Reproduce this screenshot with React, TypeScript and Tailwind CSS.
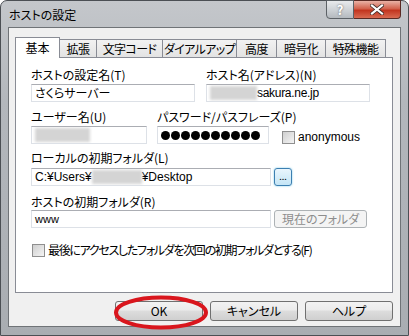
import { useState } from "react";

const tabs = [
  { label: "基本", w: "w-[45px]" },
  { label: "拡張", w: "w-[37px]" },
  { label: "文字コード", w: "w-[66px]" },
  { label: "ダイアルアップ", w: "w-[74px]" },
  { label: "高度", w: "w-[40px]" },
  { label: "暗号化", w: "w-[49px]" },
  { label: "特殊機能", w: "w-[60px]" },
];

/* blurred (hidden) text inside a field */
const Blur = ({ w }: { w: string }) => (
  <span className={`inline-block h-[14px] ${w} bg-[#d4d4d4] blur-[1.5px]`} />
);

const Check = () => (
  <span className="inline-block w-[13px] h-[13px] border border-[#8f8f8f] bg-[linear-gradient(135deg,#cfcfcf,#f4f4f4)] shrink-0" />
);

const Field = ({ w, children }: { w: string; children?: React.ReactNode }) => (
  <div
    className={`${w} h-[18px] flex items-center px-[3px] bg-white border border-[#dde1e7] border-t-[#abadb3] text-[12px] leading-none whitespace-nowrap overflow-hidden`}
  >
    {children}
  </div>
);

const Button = ({ label, w = "w-[88px]" }: { label: string; w?: string }) => (
  <button className={`${w} h-[20px] rounded-[3px] border border-[#707070] bg-[linear-gradient(180deg,#f2f2f2_0%,#ebebeb_45%,#dddddd_50%,#cfcfcf_100%)] text-[12px] leading-none text-black`}>
    {label}
  </button>
);

const App = () => {
  const [active] = useState(0);

  return (
    <div className="w-[409px] h-[336px] overflow-hidden bg-white font-['Noto_Sans_CJK_JP',sans-serif] [font-feature-settings:'palt'] text-black relative">
      {/* WINDOW FRAME */}
      <div className="w-full h-full flex flex-col rounded-t-[7px] border border-[#4b4f54] bg-[linear-gradient(180deg,#c4c7cb_0%,#b3b7bc_30%,#a9adb2_100%)] px-[7px] pb-[8px]">
        {/* TITLE BAR */}
        <div className="h-[26px] flex items-start justify-between">
          <span className="self-center pl-[1px] pt-[2px] text-[12px] text-black">ホストの設定</span>
          <div className="flex -mt-px">
            <div className="w-[28px] h-[19px] rounded-bl-[4px] border border-[#5c6166] bg-[linear-gradient(180deg,#e8eaec_0%,#cfd3d7_50%,#b4b9be_100%)] flex items-center justify-center text-white text-[13px] font-bold [text-shadow:0_0_2px_#555]">
              ?
            </div>
            <div className="w-[47px] h-[19px] rounded-br-[4px] border border-l-0 border-[#5a2a24] bg-[linear-gradient(180deg,#e9b2a6_0%,#d2624d_45%,#c2351f_55%,#d96b52_100%)] flex items-center justify-center">
              <svg width="14" height="11" viewBox="0 0 14 11">
                <path d="M2 1.5 L12 9.5 M12 1.5 L2 9.5" stroke="#3d2a26" strokeWidth="3.6" strokeLinecap="square" />
                <path d="M2 1.5 L12 9.5 M12 1.5 L2 9.5" stroke="#ffffff" strokeWidth="2.2" strokeLinecap="square" />
              </svg>
            </div>
          </div>
        </div>

        {/* CLIENT AREA */}
        <div className="flex-1 border border-[#6f7377] bg-[#f0f0f0] pl-[6px] pr-[7px] pt-[9px] flex flex-col">
          {/* TABS */}
          <div className="h-[20px] flex items-end relative z-10">
            {tabs.map((t, i) =>
              i === active ? (
                <div
                  key={t.label}
                  className={`${t.w} h-[21px] -mb-px bg-white border border-b-0 border-[#898c95] flex items-center justify-center text-[12px] leading-none whitespace-nowrap`}
                >
                  {t.label}
                </div>
              ) : (
                <div
                  key={t.label}
                  className={`${t.w} h-[18px] bg-[linear-gradient(180deg,#f2f2f2,#e3e3e3)] border border-b-0 border-l-0 border-[#898c95] flex items-center justify-center text-[12px] leading-none whitespace-nowrap tracking-[-0.6px]`}
                >
                  {t.label}
                </div>
              )
            )}
          </div>

          {/* PANEL */}
          <div className="h-[236px] bg-white border border-[#898c95] pl-[15px] pt-[10px] text-[12px] leading-[14px]">
            <div className="flex gap-[11px]">
              <div>
                <div>ホストの設定名(T)</div>
                <div className="mt-[2px]">
                  <Field w="w-[164px]">さくらサーバー</Field>
                </div>
              </div>
              <div>
                <div>ホスト名(アドレス)(N)</div>
                <div className="mt-[2px]">
                  <Field w="w-[164px]">
                    <Blur w="w-[47px]" />
                    <span className="font-['Liberation_Sans',sans-serif] tracking-[-0.3px]">sakura.ne.jp</span>
                  </Field>
                </div>
              </div>
            </div>

            <div className="flex gap-[10px] mt-[8px]">
              <div>
                <div>ユーザー名(U)</div>
                <div className="mt-[2px]">
                  <Field w="w-[116px]">
                    <Blur w="w-[55px]" />
                  </Field>
                </div>
              </div>
              <div>
                <div>パスワード/パスフレーズ(P)</div>
                <div className="mt-[2px] flex items-center">
                  <Field w="w-[112px]">
                    <div className="flex gap-px">
                      {Array.from({ length: 10 }).map((_, i) => (
                        <span key={i} className="w-[9px] h-[9px] rounded-full bg-black" />
                      ))}
                    </div>
                  </Field>
                  <div className="ml-[13px] mt-[4px] flex items-center gap-[3px]">
                    <Check />
                    <span className="font-['Liberation_Sans',sans-serif] text-[12px]">anonymous</span>
                  </div>
                </div>
              </div>
            </div>

            <div className="mt-[7px]">ローカルの初期フォルダ(L)</div>
            <div className="mt-[3px] flex items-center gap-[3px]">
              <Field w="w-[240px]">
                <span className="font-['Liberation_Sans',sans-serif]">C:¥Users¥</span>
                <Blur w="w-[50px]" />
                <span className="font-['Liberation_Sans',sans-serif]">¥Desktop</span>
              </Field>
              <div className="w-[18px] h-[18px] rounded-[3px] border border-[#3c7fb1] bg-[linear-gradient(180deg,#eaf6fd,#c4e5f6)] shadow-[0_0_2px_#6fc6e8] flex items-center justify-center text-[9px] leading-none pb-[2px]">
                ...
              </div>
            </div>

            <div className="mt-[9px]">ホストの初期フォルダ(R)</div>
            <div className="mt-px flex items-center gap-[3px]">
              <Field w="w-[240px]">
                <span className="font-['Liberation_Sans',sans-serif] text-[11px]">www</span>
              </Field>
              <div className="w-[93px] h-[18px] rounded-[3px] border border-[#adb2b5] bg-[#f4f4f4] flex items-center justify-center text-[12px] leading-none text-[#8d8d8d]">
                現在のフォルダ
              </div>
            </div>

            <div className="mt-[15px] flex items-center gap-[3px] pl-px">
              <Check />
              <span className="tracking-[-1.3px]">最後にアクセスしたフォルダを次回の初期フォルダとする(F)</span>
            </div>
          </div>

          {/* BUTTONS */}
          <div className="mt-[8px] flex justify-end gap-[7px]">
            <Button label="OK" />
            <Button label="キャンセル" />
            <Button label="ヘルプ" />
          </div>
        </div>
      </div>

      {/* red annotation ellipse round OK */}
      <svg className="absolute left-[112px] top-[294px]" width="100" height="38" viewBox="0 0 100 38">
        <ellipse cx="49" cy="18.5" rx="45" ry="15" fill="none" stroke="#d9161d" strokeWidth="4" />
      </svg>
    </div>
  );
};

export default App;
